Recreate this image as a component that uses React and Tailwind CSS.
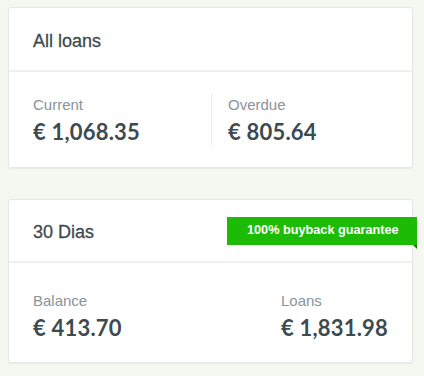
export default function App() {
  const sans = { fontFamily: '"Liberation Sans", Arial, sans-serif' };
  const lato = { fontFamily: 'Lato, sans-serif' };
  return (
    <div className="min-h-[376px] w-[424px] bg-[#f5f8f1] pt-[7px]" style={sans}>
      <div className="ml-2 w-[405px] rounded-[3px] border border-[#e6e8e6] bg-white shadow-[0_1px_2px_rgba(0,0,0,0.06)]">
        <div className="flex h-[64px] items-center border-b-2 border-[#eef0f1] px-6 pt-[5px]">
          <span className="text-[18px] text-[#3f4a4f] [-webkit-text-stroke:0.3px_#3f4a4f]">All loans</span>
        </div>
        <div className="flex h-[95px] items-center">
          <div className="flex w-[203px] flex-col border-r border-[#eceeef] pl-6 pt-[3px] pb-[1px]">
            <span className="text-[15px] leading-[18px] text-[#8a939c]">Current</span>
            <span className="mt-[5px] text-[22px] font-bold leading-[26px] tracking-[0.2px] text-[#3d4a4f]" style={lato}>€ 1,068.35</span>
          </div>
          <div className="flex flex-col pl-4 pt-[3px] pb-[1px]">
            <span className="text-[15px] leading-[18px] text-[#8a939c]">Overdue</span>
            <span className="mt-[5px] text-[22px] font-bold leading-[26px] tracking-[0.2px] text-[#3d4a4f]" style={lato}>€ 805.64</span>
          </div>
        </div>
      </div>

      <div className="relative ml-2 mt-[31px] w-[405px] rounded-[3px] border border-[#e6e8e6] bg-white shadow-[0_1px_2px_rgba(0,0,0,0.06)]">
        <div className="flex h-[63px] items-center border-b-2 border-[#eef0f1] px-6 pt-[4px]">
          <span className="text-[18px] text-[#3f4a4f] [-webkit-text-stroke:0.3px_#3f4a4f]">30 Dias</span>
        </div>
        <div className="flex h-[99px] items-start justify-between px-6 pt-[29px]">
          <div className="flex flex-col">
            <span className="text-[15px] leading-[18px] text-[#8a939c]">Balance</span>
            <span className="mt-[5px] text-[22px] font-bold leading-[26px] tracking-[0.2px] text-[#3d4a4f]" style={lato}>€ 413.70</span>
          </div>
          <div className="flex flex-col">
            <span className="text-[15px] leading-[18px] text-[#8a939c]">Loans</span>
            <span className="mt-[5px] text-[22px] font-bold leading-[26px] tracking-[0.2px] text-[#3d4a4f]" style={lato}>€ 1,831.98</span>
          </div>
        </div>
        <div className="absolute left-[218px] right-[-5px] top-[17px] flex h-[28px] items-center bg-[#1bbb06] pl-[20px]">
          <span className="text-[12.7px] font-bold text-white">100% buyback guarantee</span>
          <div className="absolute bottom-[-4px] right-0 h-0 w-0 border-l-[4px] border-t-[4px] border-l-transparent border-t-[#0f7a05]" />
        </div>
      </div>
    </div>
  );
}
